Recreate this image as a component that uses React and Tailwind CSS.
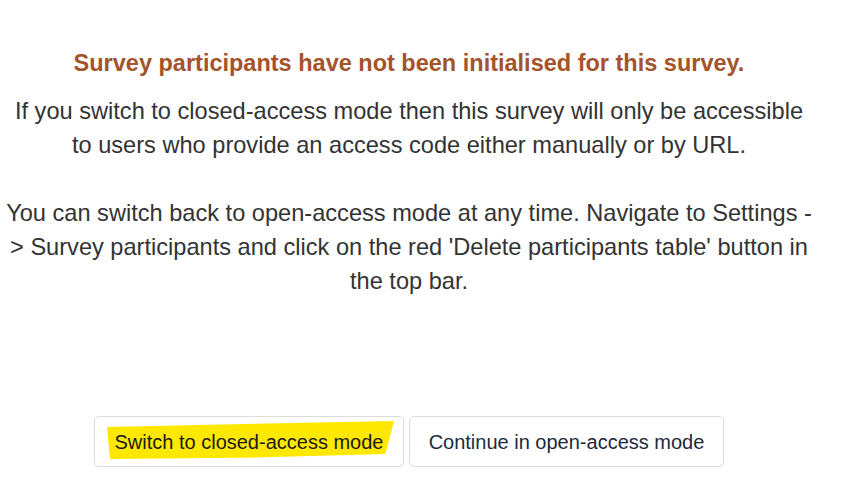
export default function App() {
  return (
    <div className="min-h-[486px] w-[858px] bg-white font-['Liberation_Sans',Arial,sans-serif]">
      <div className="ml-[3px] w-[812px] flex flex-col items-center text-center">
        <h2 className="mt-[51px] text-[23.5px] leading-[24px] font-bold text-[#a4532a]">
          Survey participants have not been initialised for this survey.
        </h2>

        <p className="mt-[19px] text-[23.6px] leading-[34px] text-[#333333]">
          If you switch to closed-access mode then this survey will only be accessible to users who provide an access code either manually or by URL.
        </p>

        <p className="mt-[34px] text-[23.6px] leading-[34px] text-[#333333]">
          You can switch back to open-access mode at any time. Navigate to Settings -&gt; Survey participants and click on the red 'Delete participants table' button in the top bar.
        </p>

        <div className="mt-[118px] flex gap-[5px]">
          <button className="relative h-[51px] w-[310px] rounded-[5px] border border-[#dcdcdc] bg-white text-[20px] text-[#1a1a1a]">
            <span className="absolute left-[12px] top-[4px] h-[38px] w-[287px] bg-[#ffe800] [clip-path:polygon(0%_16%,48%_8%,100%_0%,97%_87%,46%_97%,1%_100%)]" />
            <span className="relative">Switch to closed-access mode</span>
          </button>
          <button className="h-[51px] w-[315px] rounded-[5px] border border-[#dcdcdc] bg-white text-[20px] text-[#1e293b]">
            Continue in open-access mode
          </button>
        </div>
      </div>
    </div>
  );
}
